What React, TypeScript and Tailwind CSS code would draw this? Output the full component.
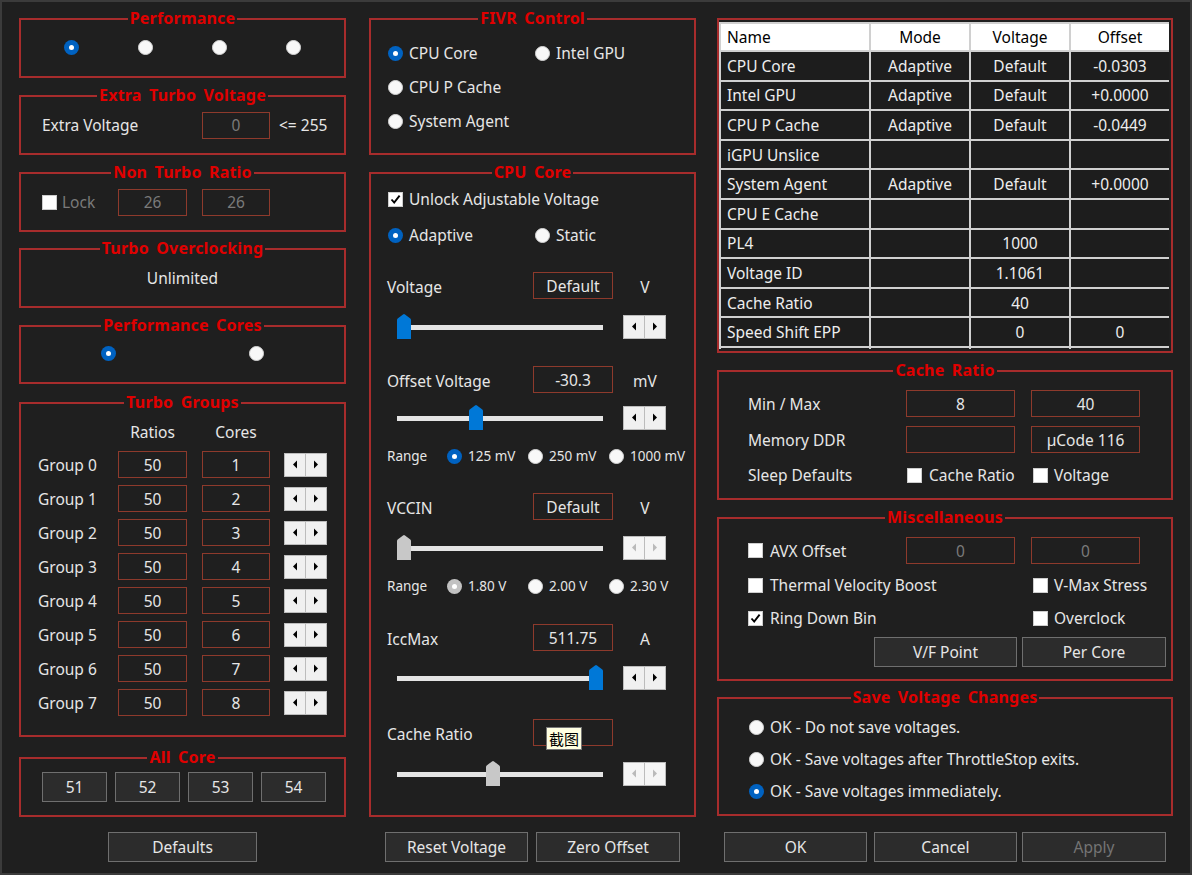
import React from "react";

type Kids = { children?: React.ReactNode };

function Group({ title, className = "", children }: { title?: string; className?: string } & Kids) {
  return (
    <div className={`relative shrink-0 border-2 border-[#a72c2c] ${className}`}>
      {title && (
        <div className="pointer-events-none absolute inset-x-0 -top-[12px] flex justify-center">
          <span className="bg-[#1f1f1f] px-[2px] text-[16px] font-bold leading-[20px] tracking-[0.2px] text-[#e00000] [word-spacing:3px]">
            {title}
          </span>
        </div>
      )}
      {children}
    </div>
  );
}

function Radio({ checked = false, disabled = false }: { checked?: boolean; disabled?: boolean }) {
  if (checked) {
    return (
      <span
        className={`flex h-[15px] w-[15px] shrink-0 items-center justify-center rounded-full ${
          disabled ? "bg-[#c2c2c2]" : "bg-[#0062c1]"
        }`}
      >
        <span className="h-[5px] w-[5px] rounded-full bg-white" />
      </span>
    );
  }
  return <span className="h-[15px] w-[15px] shrink-0 rounded-full border border-[#d6d6d6] bg-[#f8f8f8]" />;
}

function Check({ checked = false }: { checked?: boolean }) {
  return (
    <span className="flex h-[15px] w-[15px] shrink-0 items-center justify-center border border-[#cdcdcd] bg-white">
      {checked && (
        <svg width="11" height="11" viewBox="0 0 11 11">
          <path d="M1.5 5.5 L4.2 8.6 L9.6 1.6" fill="none" stroke="#000" strokeWidth="1.9" />
        </svg>
      )}
    </span>
  );
}

function Edit({ value = "", w = "w-[68px]", dim = false, children }: { value?: string; w?: string; dim?: boolean } & Kids) {
  return (
    <div
      className={`relative flex h-[27px] shrink-0 items-center justify-center border border-[#8e3a2c] ${w} ${
        dim ? "text-[#7a7a7a]" : "text-[#e6e6e6]"
      }`}
    >
      {value}
      {children}
    </div>
  );
}

function Btn({ label, w, dim = false, className = "" }: { label: string; w: string; dim?: boolean; className?: string }) {
  return (
    <button
      className={`flex h-[30px] shrink-0 items-center justify-center border border-[#6f6f6f] bg-[#2c2c2c] ${w} ${
        dim ? "text-[#747474]" : "text-[#e6e6e6]"
      } ${className}`}
    >
      {label}
    </button>
  );
}

function Spin({ disabled = false }: { disabled?: boolean }) {
  const c = disabled ? "#bababa" : "#000";
  return (
    <div className="flex h-[24px] shrink-0">
      <div className={`flex h-[24px] w-[22px] items-center justify-center border border-[#bcbcbc] ${disabled ? "bg-[#f5f5f5]" : "bg-[#f0f0f0]"}`}>
        <svg width="6" height="9" viewBox="0 0 6 9">
          <path d="M5 0.5 V8.5 L1 4.5 Z" fill={c} />
        </svg>
      </div>
      <div className={`-ml-px flex h-[24px] w-[22px] items-center justify-center border border-[#bcbcbc] ${disabled ? "bg-[#f5f5f5]" : "bg-[#f0f0f0]"}`}>
        <svg width="6" height="9" viewBox="0 0 6 9">
          <path d="M1 0.5 V8.5 L5 4.5 Z" fill={c} />
        </svg>
      </div>
    </div>
  );
}

function Slider({ pos, disabled = false }: { pos: number; disabled?: boolean }) {
  return (
    <div className="relative h-[25px] w-[206px] shrink-0">
      <div className="absolute inset-x-0 top-[11px] h-[5px] bg-[#e4e4e4]" />
      <svg className="absolute top-0" style={{ left: pos - 7 }} width="14" height="25" viewBox="0 0 14 25">
        <path d="M0 6 Q0 5 1 4.3 L6 0.4 Q7 -0.2 8 0.4 L13 4.3 Q14 5 14 6 V25 H0 Z" fill={disabled ? "#c8c8c8" : "#0078d7"} />
      </svg>
    </div>
  );
}

function ValueRow({ label, value, unit, mt, children }: { label: string; value: string; unit: string; mt: string } & Kids) {
  return (
    <div className={`flex h-[27px] items-center pl-[16px] ${mt}`}>
      <span className="w-[146px] translate-y-[1px]">{label}</span>
      <Edit value={value} w="w-[80px]">
        {children}
      </Edit>
      <span className="w-[64px] translate-y-[1px] text-center">{unit}</span>
    </div>
  );
}

function SliderRow({ pos, disabled = false, mt }: { pos: number; disabled?: boolean; mt: string }) {
  return (
    <div className={`flex h-[25px] items-center pl-[26px] ${mt}`}>
      <Slider pos={pos} disabled={disabled} />
      <div className="ml-[20px]">
        <Spin disabled={disabled} />
      </div>
    </div>
  );
}

function RangeRow({ items, sel, disabled = false, mt }: { items: string[]; sel: number; disabled?: boolean; mt: string }) {
  return (
    <div className={`flex h-[20px] items-center pl-[16px] text-[13.5px] ${mt}`}>
      <span className="w-[60px]">Range</span>
      {items.map((t, i) => (
        <div key={t} className="flex w-[81px] items-center">
          <Radio checked={i === sel} disabled={disabled} />
          <span className="ml-[6px]">{t}</span>
        </div>
      ))}
    </div>
  );
}

function Opt({ label, checked = false, w = "" }: { label: string; checked?: boolean; w?: string }) {
  return (
    <div className={`flex items-center ${w}`}>
      <Radio checked={checked} />
      <span className="ml-[6px]">{label}</span>
    </div>
  );
}

function Box({ label, checked = false, w = "", gap = "ml-[7px]" }: { label: string; checked?: boolean; w?: string; gap?: string }) {
  return (
    <div className={`flex items-center ${w}`}>
      <Check checked={checked} />
      <span className={gap}>{label}</span>
    </div>
  );
}

const table: [string, string, string, string][] = [
  ["CPU Core", "Adaptive", "Default", "-0.0303"],
  ["Intel GPU", "Adaptive", "Default", "+0.0000"],
  ["CPU P Cache", "Adaptive", "Default", "-0.0449"],
  ["iGPU Unslice", "", "", ""],
  ["System Agent", "Adaptive", "Default", "+0.0000"],
  ["CPU E Cache", "", "", ""],
  ["PL4", "", "1000", ""],
  ["Voltage ID", "", "1.1061", ""],
  ["Cache Ratio", "", "40", ""],
  ["Speed Shift EPP", "", "0", "0"],
  ["", "", "", ""],
];

export default function App() {
  return (
    <div className="flex h-[875px] w-[1192px] overflow-hidden border-2 border-[#3b3b3b] bg-[#1f1f1f] pl-[17px] pt-[16px] font-['Noto_Sans',sans-serif] text-[15.5px] leading-[20px] text-[#e6e6e6]">
      {/* left column */}
      <div className="flex w-[327px] shrink-0 flex-col">
        <Group title="Performance" className="h-[60px]">
          <div className="flex h-full items-center gap-[59px] pb-[2px] pl-[43px]">
            <Radio checked />
            <Radio />
            <Radio />
            <Radio />
          </div>
        </Group>

        <Group title="Extra Turbo Voltage" className="mt-[17px] h-[60px]">
          <div className="flex h-full items-center pl-[21px]">
            <span className="w-[160px]">Extra Voltage</span>
            <Edit value="0" dim />
            <span className="ml-[9px]">&lt;= 255</span>
          </div>
        </Group>

        <Group title="Non Turbo Ratio" className="mt-[17px] h-[60px]">
          <div className="flex h-full items-center pl-[21px]">
            <div className="flex w-[76px] items-center">
              <Check />
              <span className="ml-[5px] text-[#7a7a7a]">Lock</span>
            </div>
            <Edit value="26" dim w="w-[69px]" />
            <div className="ml-[15px]">
              <Edit value="26" dim />
            </div>
          </div>
        </Group>

        <Group title="Turbo Overclocking" className="mt-[16px] h-[60px]">
          <div className="flex h-full items-center justify-center">Unlimited</div>
        </Group>

        <Group title="Performance Cores" className="mt-[17px] h-[59px]">
          <div className="flex h-full items-center gap-[133px] pb-[2px] pl-[80px]">
            <Radio checked />
            <Radio />
          </div>
        </Group>

        <Group title="Turbo Groups" className="mt-[18px] h-[335px]">
          <div className="flex flex-col pt-[18px]">
            <div className="flex h-[20px] items-center pl-[97px]">
              <span className="w-[69px] text-center">Ratios</span>
              <span className="ml-[15px] w-[68px] text-center">Cores</span>
            </div>
            {[0, 1, 2, 3, 4, 5, 6, 7].map((g) => (
              <div key={g} className={`flex h-[27px] items-center pl-[17px] ${g === 0 ? "mt-[9px]" : "mt-[7px]"}`}>
                <span className="w-[80px]">Group {g}</span>
                <Edit value="50" w="w-[69px]" />
                <div className="ml-[15px]">
                  <Edit value={String(g + 1)} />
                </div>
                <div className="ml-[14px]">
                  <Spin />
                </div>
              </div>
            ))}
          </div>
        </Group>

        <Group title="All Core" className="mt-[20px] h-[60px]">
          <div className="flex h-full items-center gap-[8px] pl-[21px]">
            {["51", "52", "53", "54"].map((v) => (
              <Btn key={v} label={v} w="w-[65px]" />
            ))}
          </div>
        </Group>

        <Btn label="Defaults" w="w-[149px]" className="ml-[89px] mt-[15px]" />
      </div>

      {/* middle column */}
      <div className="ml-[23px] flex w-[327px] shrink-0 flex-col">
        <Group title="FIVR Control" className="h-[137px]">
          <div className="flex flex-col pl-[17px] pt-[23px]">
            <div className="flex h-[20px] items-center">
              <Opt label="CPU Core" checked w="w-[147px]" />
              <Opt label="Intel GPU" />
            </div>
            <div className="mt-[14px] flex h-[20px] items-center">
              <Opt label="CPU P Cache" />
            </div>
            <div className="mt-[14px] flex h-[20px] items-center">
              <Opt label="System Agent" />
            </div>
          </div>
        </Group>

        <Group title="CPU Core" className="mt-[17px] h-[645px]">
          <div className="flex flex-col pt-[15px]">
            <div className="flex h-[20px] items-center pl-[17px]">
              <Box label="Unlock Adjustable Voltage" checked gap="ml-[6px]" />
            </div>
            <div className="mt-[16px] flex h-[20px] items-center pl-[17px]">
              <Opt label="Adaptive" checked w="w-[147px]" />
              <Opt label="Static" />
            </div>

            <ValueRow label="Voltage" value="Default" unit="V" mt="mt-[27px]" />
            <SliderRow pos={7} mt="mt-[15px]" />

            <ValueRow label="Offset Voltage" value="-30.3" unit="mV" mt="mt-[27px]" />
            <SliderRow pos={79} mt="mt-[12px]" />
            <RangeRow items={["125 mV", "250 mV", "1000 mV"]} sel={0} mt="mt-[16px]" />

            <ValueRow label="VCCIN" value="Default" unit="V" mt="mt-[27px]" />
            <SliderRow pos={7} disabled mt="mt-[15px]" />
            <RangeRow items={["1.80 V", "2.00 V", "2.30 V"]} sel={0} disabled mt="mt-[16px]" />

            <ValueRow label="IccMax" value="511.75" unit="A" mt="mt-[28px]" />
            <SliderRow pos={199} mt="mt-[14px]" />

            <ValueRow label="Cache Ratio" value="40" unit="" mt="mt-[29px]">
              <div className="absolute left-[12px] top-[7px] flex h-[23px] w-[36px] items-center justify-center border border-[#767676] bg-[#ffffe1] font-['Noto_Sans_CJK_SC',sans-serif] text-[15px] text-black">
                截图
              </div>
            </ValueRow>
            <SliderRow pos={96} disabled mt="mt-[15px]" />
          </div>
        </Group>

        <div className="mt-[15px] flex">
          <Btn label="Reset Voltage" w="w-[143px]" className="ml-[16px]" />
          <Btn label="Zero Offset" w="w-[144px]" className="ml-[8px]" />
        </div>
      </div>

      {/* right column */}
      <div className="ml-[21px] flex w-[456px] shrink-0 flex-col">
        <Group className="h-[335px]">
          <div className="mt-[2px] h-[327px] w-[450px] overflow-hidden">
            <table className="w-[450px] table-fixed border-collapse text-[15.5px]">
              <colgroup>
                <col className="w-[150px]" />
                <col className="w-[100px]" />
                <col className="w-[100px]" />
                <col className="w-[100px]" />
              </colgroup>
              <thead>
                <tr className="h-[28px] bg-white text-black">
                  <th className="border-2 border-[#d0d0d0] pl-[6px] text-left font-normal">Name</th>
                  <th className="border-2 border-[#d0d0d0] font-normal">Mode</th>
                  <th className="border-2 border-[#d0d0d0] font-normal">Voltage</th>
                  <th className="border-2 border-[#d0d0d0] font-normal">Offset</th>
                </tr>
              </thead>
              <tbody>
                {table.map((r, i) => (
                  <tr key={i} className="h-[29.6px] bg-[#1d1d1d] text-[#ededed]">
                    <td className="border-2 border-[#d0d0d0] pl-[6px] text-left">{r[0]}</td>
                    <td className="border-2 border-[#d0d0d0] text-center">{r[1]}</td>
                    <td className="border-2 border-[#d0d0d0] text-center">{r[2]}</td>
                    <td className="border-2 border-[#d0d0d0] text-center">{r[3]}</td>
                  </tr>
                ))}
              </tbody>
            </table>
          </div>
        </Group>

        <Group title="Cache Ratio" className="mt-[17px] h-[130px]">
          <div className="flex flex-col pl-[29px] pt-[18px]">
            <div className="flex h-[27px] items-center">
              <span className="w-[158px]">Min / Max</span>
              <Edit value="8" w="w-[109px]" />
              <div className="ml-[16px]">
                <Edit value="40" w="w-[109px]" />
              </div>
            </div>
            <div className="mt-[9px] flex h-[27px] items-center">
              <span className="w-[158px]">Memory DDR</span>
              <Edit value="" w="w-[109px]" />
              <div className="ml-[16px]">
                <Edit value="µCode 116" w="w-[109px]" />
              </div>
            </div>
            <div className="mt-[12px] flex h-[20px] items-center">
              <span className="w-[159px]">Sleep Defaults</span>
              <Box label="Cache Ratio" w="w-[126px]" />
              <Box label="Voltage" gap="ml-[6px]" />
            </div>
          </div>
        </Group>

        <Group title="Miscellaneous" className="mt-[17px] h-[164px]">
          <div className="flex flex-col pt-[18px]">
            <div className="flex h-[27px] items-center pl-[29px]">
              <Box label="AVX Offset" w="w-[158px]" />
              <Edit value="0" dim w="w-[109px]" />
              <div className="ml-[16px]">
                <Edit value="0" dim w="w-[109px]" />
              </div>
            </div>
            <div className="mt-[11px] flex h-[20px] items-center pl-[29px]">
              <Box label="Thermal Velocity Boost" w="w-[285px]" />
              <Box label="V-Max Stress" gap="ml-[6px]" />
            </div>
            <div className="mt-[13px] flex h-[20px] items-center pl-[29px]">
              <Box label="Ring Down Bin" checked w="w-[285px]" />
              <Box label="Overclock" gap="ml-[6px]" />
            </div>
            <div className="mt-[9px] flex">
              <Btn label="V/F Point" w="w-[143px]" className="ml-[155px] h-[29px]" />
              <Btn label="Per Core" w="w-[144px]" className="ml-[5px] h-[29px]" />
            </div>
          </div>
        </Group>

        <Group title="Save Voltage Changes" className="mt-[16px] h-[119px]">
          <div className="flex flex-col pl-[30px] pt-[18px]">
            <div className="flex h-[20px] items-center">
              <Opt label="OK - Do not save voltages." />
            </div>
            <div className="mt-[12px] flex h-[20px] items-center">
              <Opt label="OK - Save voltages after ThrottleStop exits." />
            </div>
            <div className="mt-[12px] flex h-[20px] items-center">
              <Opt label="OK - Save voltages immediately." checked />
            </div>
          </div>
        </Group>

        <div className="mt-[16px] flex">
          <Btn label="OK" w="w-[143px]" className="ml-[7px]" />
          <Btn label="Cancel" w="w-[143px]" className="ml-[7px]" />
          <Btn label="Apply" w="w-[144px]" dim className="ml-[5px]" />
        </div>
      </div>
    </div>
  );
}
